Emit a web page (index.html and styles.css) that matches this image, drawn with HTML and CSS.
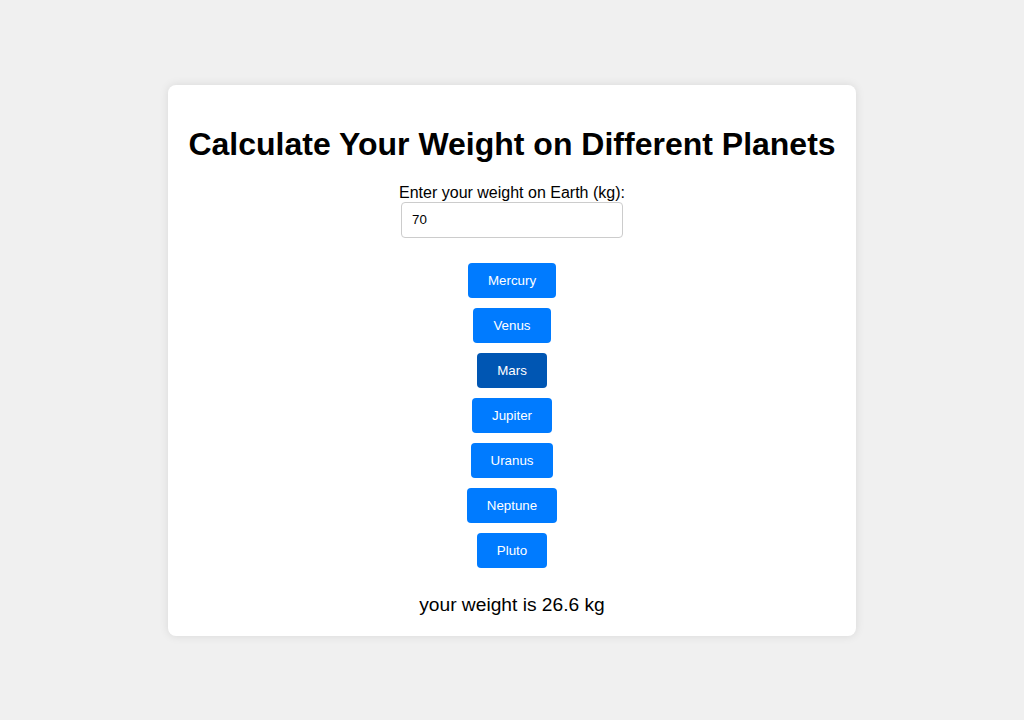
FILE: index.html
```html
<!DOCTYPE html>
<html>
<head>
<meta charset="utf-8">
<link rel="stylesheet" href="styles.css">
</head>
<body>
<div class="card">
  <h1 class="title">Calculate Your Weight on Different Planets</h1>
  <label class="label" for="w">Enter your weight on Earth (kg):</label>
  <input class="input" id="w" type="text" value="70">
  <div class="planets">
    <button class="btn">Mercury</button>
    <button class="btn">Venus</button>
    <button class="btn active">Mars</button>
    <button class="btn">Jupiter</button>
    <button class="btn">Uranus</button>
    <button class="btn">Neptune</button>
    <button class="btn">Pluto</button>
  </div>
  <p class="result">your weight is 26.6 kg</p>
</div>
</body>
</html>
```

FILE: styles.css
```css
html, body {
  margin: 0;
  padding: 0;
}
body {
  background: #f0f0f0;
  font-family: "Liberation Sans", Arial, sans-serif;
  height: 100vh;
  display: flex;
  align-items: center;
  justify-content: center;
}
.card {
  background: #fff;
  border-radius: 8px;
  box-shadow: 0 0 10px rgba(0, 0, 0, 0.1);
  padding: 20px;
  display: flex;
  flex-direction: column;
  align-items: center;
  text-align: center;
}
.title {
  font-size: 32px;
  font-weight: bold;
  margin: 21px 0 21px;
  color: #000;
}
.label {
  font-size: 16px;
  line-height: 18px;
  color: #000;
}
.input {
  box-sizing: border-box;
  width: 222px;
  height: 36px;
  padding: 0 10px;
  border: 1px solid #ccc;
  border-radius: 4px;
  font-family: "Liberation Sans", Arial, sans-serif;
  font-size: 13.333px;
  color: #000;
}
.planets {
  margin-top: 25px;
  display: flex;
  flex-direction: column;
  align-items: center;
  gap: 10px;
}
.btn {
  background: #007bff;
  color: #fff;
  border: none;
  border-radius: 4px;
  padding: 0 20px;
  height: 35px;
  font-family: "Liberation Sans", Arial, sans-serif;
  font-size: 13.333px;
  cursor: pointer;
}
.btn.active {
  background: #0056b3;
}
.result {
  margin: 25px 0 0;
  font-size: 19.2px;
  line-height: 23px;
  color: #000;
}
```
